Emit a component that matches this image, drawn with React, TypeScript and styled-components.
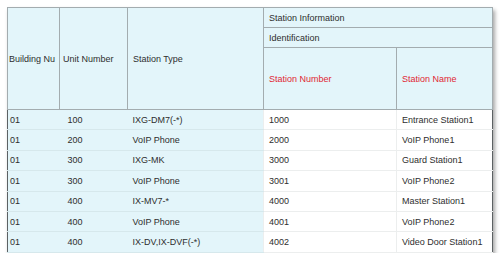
import styled, { createGlobalStyle } from 'styled-components';

type Row = { building: string; unit: string; type: string; number: string; name: string };

const rows: Row[] = [
  { building: '01', unit: '100', type: 'IXG-DM7(-*)', number: '1000', name: 'Entrance Station1' },
  { building: '01', unit: '200', type: 'VoIP Phone', number: '2000', name: 'VoIP Phone1' },
  { building: '01', unit: '300', type: 'IXG-MK', number: '3000', name: 'Guard Station1' },
  { building: '01', unit: '300', type: 'VoIP Phone', number: '3001', name: 'VoIP Phone2' },
  { building: '01', unit: '400', type: 'IX-MV7-*', number: '4000', name: 'Master Station1' },
  { building: '01', unit: '400', type: 'VoIP Phone', number: '4001', name: 'VoIP Phone2' },
  { building: '01', unit: '400', type: 'IX-DV,IX-DVF(-*)', number: '4002', name: 'Video Door Station1' },
];

export default function App() {
  return (
    <>
      <GlobalStyle />
      <Page>
        <Grid>
          <colgroup>
            <col style={{ width: 52 }} />
            <col style={{ width: 68 }} />
            <col style={{ width: 136 }} />
            <col style={{ width: 133 }} />
            <col style={{ width: 96 }} />
          </colgroup>
          <thead>
            <tr>
              <HeadCell rowSpan={3} $indent={1}>Building Nu</HeadCell>
              <HeadCell rowSpan={3} $indent={3}>Unit Number</HeadCell>
              <HeadCell rowSpan={3}>Station Type</HeadCell>
              <GroupCell colSpan={2}>Station Information</GroupCell>
            </tr>
            <tr>
              <GroupCell colSpan={2}>Identification</GroupCell>
            </tr>
            <LeafRow>
              <HeadCell $required>Station Number</HeadCell>
              <HeadCell $required>Station Name</HeadCell>
            </LeafRow>
          </thead>
          <tbody>
            {rows.map((r, i) => (
              <BodyRow key={i}>
                <FrozenCell $indent={2}>{r.building}</FrozenCell>
                <FrozenCell $indent={8}>{r.unit}</FrozenCell>
                <FrozenCell>{r.type}</FrozenCell>
                <DataCell>{r.number}</DataCell>
                <DataCell>{r.name}</DataCell>
              </BodyRow>
            ))}
          </tbody>
        </Grid>
      </Page>
    </>
  );
}

const GlobalStyle = createGlobalStyle`
  body {
    margin: 0;
    background: #ffffff;
    font-family: "Liberation Sans", Arial, sans-serif;
  }
`;

const Page = styled.div`
  padding: 7px 0 0 7px;
`;

const Grid = styled.table`
  width: 485px;
  table-layout: fixed;
  border-collapse: collapse;
  border: 1px solid #5c6163;
  box-shadow: 2px 3px 4px rgba(0, 0, 0, 0.35);
  font-size: 9px;
  color: #2e2e2e;
`;

const HeadCell = styled.th<{ $indent?: number; $required?: boolean }>`
  background: #e3f5fa;
  border: 1px solid #a3acaf;
  padding: 0 0 0 ${(p) => p.$indent ?? 5}px;
  text-align: left;
  font-weight: normal;
  vertical-align: middle;
  white-space: nowrap;
  overflow: hidden;
  color: ${(p) => (p.$required ? '#e11f33' : '#2e2e2e')};
`;

const GroupCell = styled(HeadCell)`
  height: 19px;
`;

const LeafRow = styled.tr`
  height: 62px;
`;

const BodyRow = styled.tr`
  height: 20.4px;
`;

const FrozenCell = styled.td<{ $indent?: number }>`
  background: #e3f5fa;
  border-bottom: 1px solid #d6e8ec;
  padding: 0 0 0 ${(p) => p.$indent ?? 5}px;
  white-space: nowrap;
  overflow: hidden;
`;

const DataCell = styled.td`
  background: #ffffff;
  border-bottom: 1px solid #eceeee;
  border-left: 1px solid #eceeee;
  padding: 0 0 0 5px;
  white-space: nowrap;
  overflow: hidden;
`;
